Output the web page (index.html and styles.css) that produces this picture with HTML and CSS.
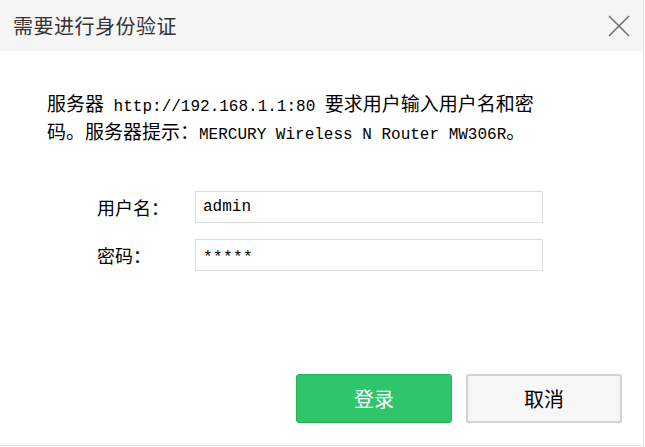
FILE: index.html
```html
<!DOCTYPE html>
<html lang="zh-CN">
<head>
    <meta charset="UTF-8">
    <meta name="viewport" content="width=device-width, initial-scale=1.0">
    <title>需要进行身份验证</title>
    <link rel="stylesheet" href="styles.css">
</head>
<body>
    <div class="dialog">
        <div class="dialog-header">
            <h2>需要进行身份验证</h2>
            <button class="close-btn" aria-label="关闭">
                <svg width="22" height="22" viewBox="0 0 22 22">
                    <path d="M1 1 L21 21 M21 1 L1 21" stroke="#707070" stroke-width="1.6" fill="none"/>
                </svg>
            </button>
        </div>
        <div class="dialog-body">
            <p class="message">服务器<span class="mono"> http://192.168.1.1:80 </span>要求用户输入用户名和密<br>码。服务器提示：<span class="mono">MERCURY Wireless N Router MW306R</span>。</p>
            <div class="form">
                <div class="row">
                    <label>用户名：</label>
                    <input type="text" value="admin">
                </div>
                <div class="row">
                    <label>密码：</label>
                    <input type="text" class="masked" value="*****">
                </div>
            </div>
            <div class="actions">
                <button class="btn btn-login">登录</button>
                <button class="btn btn-cancel">取消</button>
            </div>
        </div>
    </div>
</body>
</html>
```

FILE: styles.css
```css
body {
    margin: 0;
    background: #fff;
    font-family: "Noto Sans CJK SC", "Liberation Sans", sans-serif;
    color: #000;
}

.dialog {
    width: 643px;
    height: 445px;
    border-right: 1px solid #e3e3e3;
    border-bottom: 1px solid #e3e3e3;
    display: flex;
    flex-direction: column;
}

.dialog-header {
    height: 51px;
    background: #f5f5f5;
    display: flex;
    align-items: center;
    justify-content: space-between;
    padding: 0 13px 0 13px;
}

.dialog-header h2 {
    margin: 0;
    font-size: 20px;
    font-weight: normal;
    color: #333;
    letter-spacing: 0.5px;
}

.close-btn {
    background: none;
    border: none;
    padding: 0;
    width: 22px;
    height: 22px;
    cursor: pointer;
}

.dialog-body {
    flex: 1;
    display: flex;
    flex-direction: column;
    padding: 0 21px 22px 47px;
}

.message {
    margin: 40px 0 0;
    font-size: 19px;
    line-height: 24px;
}

.mono {
    font-family: "Liberation Mono", monospace;
    font-size: 16px;
}

.form {
    margin-top: 44px;
    padding-left: 50px;
    display: flex;
    flex-direction: column;
    gap: 16px;
}

.row {
    display: flex;
    align-items: center;
}

.row label {
    width: 98px;
    font-size: 18px;
}

.row input {
    width: 348px;
    height: 32px;
    box-sizing: border-box;
    border: 1px solid #dcdcdc;
    padding: 0 7px;
    font-family: "Liberation Mono", monospace;
    font-size: 16px;
    color: #000;
    outline: none;
}

.row input.masked {
    padding-top: 6px;
    letter-spacing: 0.4px;
}

.actions {
    margin-top: auto;
    display: flex;
    justify-content: flex-end;
    gap: 14px;
}

.btn {
    width: 156px;
    height: 49px;
    border-radius: 3px;
    font-family: "Noto Sans CJK SC", sans-serif;
    font-size: 20px;
    cursor: pointer;
}

.btn-login {
    background: #2fc66b;
    border: 1px solid #25b05c;
    color: #fff;
}

.btn-cancel {
    background: #f7f7f7;
    border: 2px solid #d2d2d2;
    color: #000;
}
```
